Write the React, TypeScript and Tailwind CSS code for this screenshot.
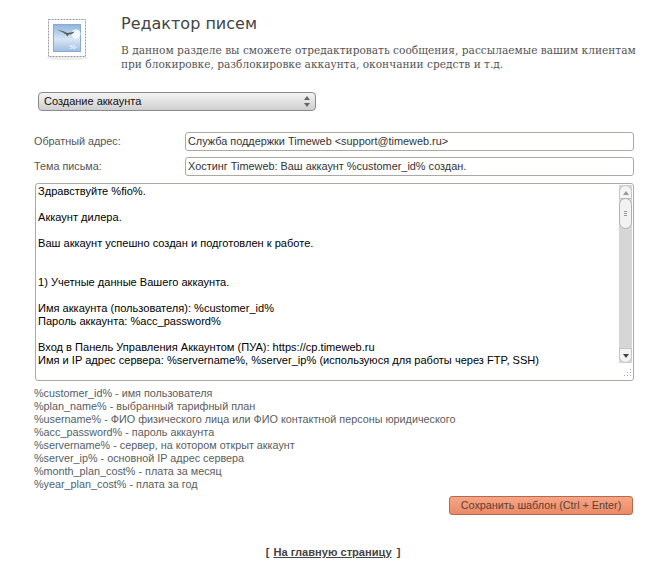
const message = [
  'Здравствуйте %fio%.',
  '',
  'Аккаунт дилера.',
  '',
  'Ваш аккаунт успешно создан и подготовлен к работе.',
  '',
  '',
  '1) Учетные данные Вашего аккаунта.',
  '',
  'Имя аккаунта (пользователя): %customer_id%',
  'Пароль аккаунта: %acc_password%',
  '',
  'Вход в Панель Управления Аккаунтом (ПУА): https://cp.timeweb.ru',
  'Имя и IP адрес сервера: %servername%, %server_ip% (используюся для работы через FTP, SSH)',
];

const vars = [
  ['%customer_id%', 'имя пользователя'],
  ['%plan_name%', 'выбранный тарифный план'],
  ['%username%', 'ФИО физического лица или ФИО контактной персоны юридического'],
  ['%acc_password%', 'пароль аккаунта'],
  ['%servername%', 'сервер, на котором открыт аккаунт'],
  ['%server_ip%', 'основной IP адрес сервера'],
  ['%month_plan_cost%', 'плата за месяц'],
  ['%year_plan_cost%', 'плата за год'],
];

function StampIcon() {
  return (
    <svg width="44" height="44" viewBox="0 0 44 44" className="shrink-0">
      <defs>
        <linearGradient id="sky" x1="0" y1="0" x2="0" y2="1">
          <stop offset="0" stopColor="#8fb4de" />
          <stop offset="0.55" stopColor="#d9e6f4" />
          <stop offset="1" stopColor="#9dbde0" />
        </linearGradient>
      </defs>
      <ellipse cx="22" cy="40" rx="21" ry="2" fill="#ececec" />
      <rect x="3.5" y="1.5" width="37" height="37" fill="#fff" stroke="#9a9a9a" strokeWidth="1" strokeDasharray="2 1" />
      <rect x="8.5" y="6.5" width="27" height="27" fill="url(#sky)" stroke="#8aaad2" />
      <circle cx="31" cy="16" r="4.5" fill="#f4f8fc" />
      <path d="M12 11.5 L19 13.5 L22 15 L26 14.5 L30 13.5 L27 16 L23.5 16.5 L22.5 18.5 L21 16.5 L18 14.5 Z" fill="#55585a" />
      <text x="24.5" y="31" fontSize="5.5" fontWeight="700" fill="#eef4fa">50-</text>
    </svg>
  );
}

function Scrollbar() {
  return (
    <div className="flex w-[13px] shrink-0 flex-col bg-[#d6d6d6]">
      <div className="flex h-[14px] items-start justify-center rounded-t-[7px] border border-[#c4c4c4] bg-[#f4f4f4] pt-[5px]">
        <div className="h-0 w-0 border-x-[3px] border-b-[4px] border-x-transparent border-b-[#999]" />
      </div>
      <div className="-mt-[1px] flex h-[31px] flex-col items-center justify-center gap-[1px] rounded-[7px] border border-[#b0b0b0] bg-[#f2f2f2]">
        <div className="h-px w-[3px] bg-[#999]" />
        <div className="h-px w-[3px] bg-[#999]" />
        <div className="h-px w-[3px] bg-[#999]" />
      </div>
      <div className="flex-1" />
      <div className="flex h-[15px] items-center justify-center rounded-b-[7px] border border-[#c4c4c4] bg-[#f4f4f4]">
        <div className="h-0 w-0 border-x-[3px] border-t-[4px] border-x-transparent border-t-[#444]" />
      </div>
    </div>
  );
}

function Field({ label, value }: { label: string; value: string }) {
  return (
    <div className="flex h-[19px] items-center">
      <label className="w-[151px] shrink-0 text-[10.8px] text-[#555]">{label}</label>
      <div className="flex h-[19px] w-[449px] items-center rounded-[3px] border border-[#aaa9a3] px-[2px] text-[10.9px] text-[#333]">
        {value}
      </div>
    </div>
  );
}

export default function App() {
  return (
    <div className="h-[566px] w-[664px] overflow-hidden bg-white pl-[34px] font-['Liberation_Sans',Arial,sans-serif] text-[12px]">
      {/* Header */}
      <div className="flex pt-[14px]">
        <div className="w-[87px] pt-[4px] pl-[11px]">
          <StampIcon />
        </div>
        <div>
          <h1 className="font-['DejaVu_Sans',sans-serif] text-[16px] leading-[20px] text-[#444]">Редактор писем</h1>
          <p className="mt-[9px] w-[520px] font-['DejaVu_Serif',serif] text-[10.6px] leading-[14px] text-[#555]">
            В данном разделе вы сможете отредактировать сообщения, рассылаемые вашим клиентам при блокировке, разблокировке аккаунта, окончании средств и т.д.
          </p>
        </div>
      </div>

      {/* Template select */}
      <div className="mt-[21px] ml-[4px] flex h-[19px] w-[278px] items-center justify-between rounded-[4px] border border-[#8a8a8a] bg-gradient-to-b from-[#f4f4f4] to-[#cfcfcf] pr-[5px] pl-[5px] text-[11px] text-[#111]">
        <span>Создание аккаунта</span>
        <div className="flex flex-col gap-[3px]">
          <div className="h-0 w-0 border-x-[3px] border-b-[4px] border-x-transparent border-b-[#666]" />
          <div className="h-0 w-0 border-x-[3px] border-t-[4px] border-x-transparent border-t-[#666]" />
        </div>
      </div>

      {/* Address and subject */}
      <div className="mt-[21px] flex flex-col gap-[6px]">
        <Field label="Обратный адрес:" value="Служба поддержки Timeweb <support@timeweb.ru>" />
        <Field label="Тема письма:" value="Хостинг Timeweb: Ваш аккаунт %customer_id% создан." />
      </div>

      {/* Message body */}
      <div className="relative mt-[7px] ml-[1px] flex h-[198px] w-[599px] rounded-[3px] border border-[#aaa9a3] pt-px pr-px pl-[2px]">
        <div className="flex-1 overflow-hidden text-[11.07px] leading-[13px] whitespace-pre text-black">
          {message.map((line, i) => (
            <div key={i} className="h-[13px]">{line}</div>
          ))}
        </div>
        <div className="flex h-[178px]">
          <Scrollbar />
        </div>
        <svg width="12" height="12" viewBox="0 0 12 12" className="absolute right-0 bottom-0">
          <g fill="#aaa">
            <rect x="9" y="1" width="1" height="1" />
            <rect x="6" y="4" width="1" height="1" />
            <rect x="9" y="4" width="1" height="1" />
            <rect x="3" y="7" width="1" height="1" />
            <rect x="6" y="7" width="1" height="1" />
            <rect x="9" y="7" width="1" height="1" />
          </g>
        </svg>
      </div>

      {/* Template variables */}
      <ul className="mt-[6px] text-[10.8px] leading-[13px] text-[#5c5c5c]">
        {vars.map(([name, text]) => (
          <li key={name}>
            <span className="text-[#50606a]">{name}</span> - {text}
          </li>
        ))}
      </ul>

      <div className="mt-[5px] flex w-[599px] justify-end">
        <button className="h-[19px] w-[184px] rounded-[3px] border border-[#b56a4c] bg-gradient-to-b from-[#f7a585] to-[#ea8a66] text-[10.8px] leading-none text-[#5a4238]">
          Сохранить шаблон (Ctrl + Enter)
        </button>
      </div>

      <div className="mt-[29px] w-[664px] -translate-x-[33px] text-center text-[11.1px] font-bold text-[#444]">
        [ <a href="#" className="ml-[1px] mr-[2px] underline">На главную страницу</a> ]
      </div>
    </div>
  );
}
